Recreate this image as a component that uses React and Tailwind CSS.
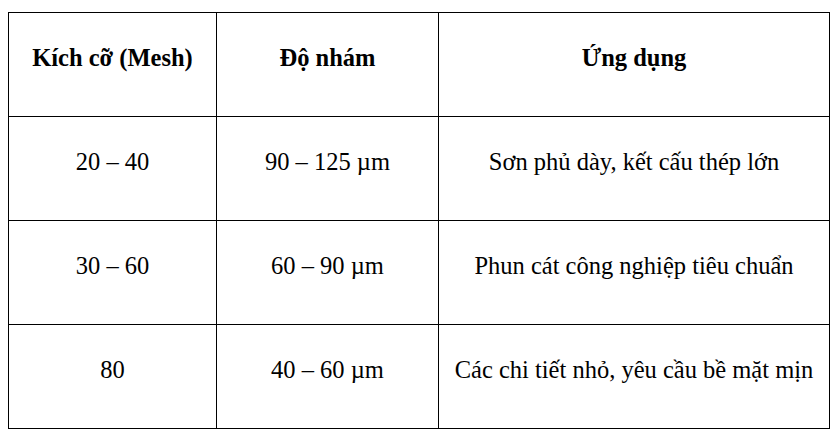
import React from 'react';

const rows = [
  ['20 – 40', '90 – 125 µm', 'Sơn phủ dày, kết cấu thép lớn'],
  ['30 – 60', '60 – 90 µm', 'Phun cát công nghiệp tiêu chuẩn'],
  ['80', '40 – 60 µm', 'Các chi tiết nhỏ, yêu cầu bề mặt mịn'],
];

const App = () => {
  return (
    <div className="bg-white w-[839px] h-[436px] pt-[12px] pl-[8px] text-black">
      <table className="border-collapse table-fixed w-[821px] text-[24.5px] font-['Liberation_Serif','Times_New_Roman',serif]">
        <colgroup>
          <col className="w-[208px]" />
          <col className="w-[222px]" />
          <col className="w-[391px]" />
        </colgroup>
        <thead>
          <tr className="h-[104px]">
            <th className="border border-black font-bold text-center align-middle pb-[13px]">Kích cỡ (Mesh)</th>
            <th className="border border-black font-bold text-center align-middle pb-[13px]">Độ nhám</th>
            <th className="border border-black font-bold text-center align-middle pb-[13px]">Ứng dụng</th>
          </tr>
        </thead>
        <tbody>
          {rows.map((r, i) => (
            <tr key={i} className="h-[104px]">
              {r.map((c, j) => (
                <td key={j} className="border border-black text-center align-middle pb-[12px]">{c}</td>
              ))}
            </tr>
          ))}
        </tbody>
      </table>
    </div>
  );
};

export default App;
